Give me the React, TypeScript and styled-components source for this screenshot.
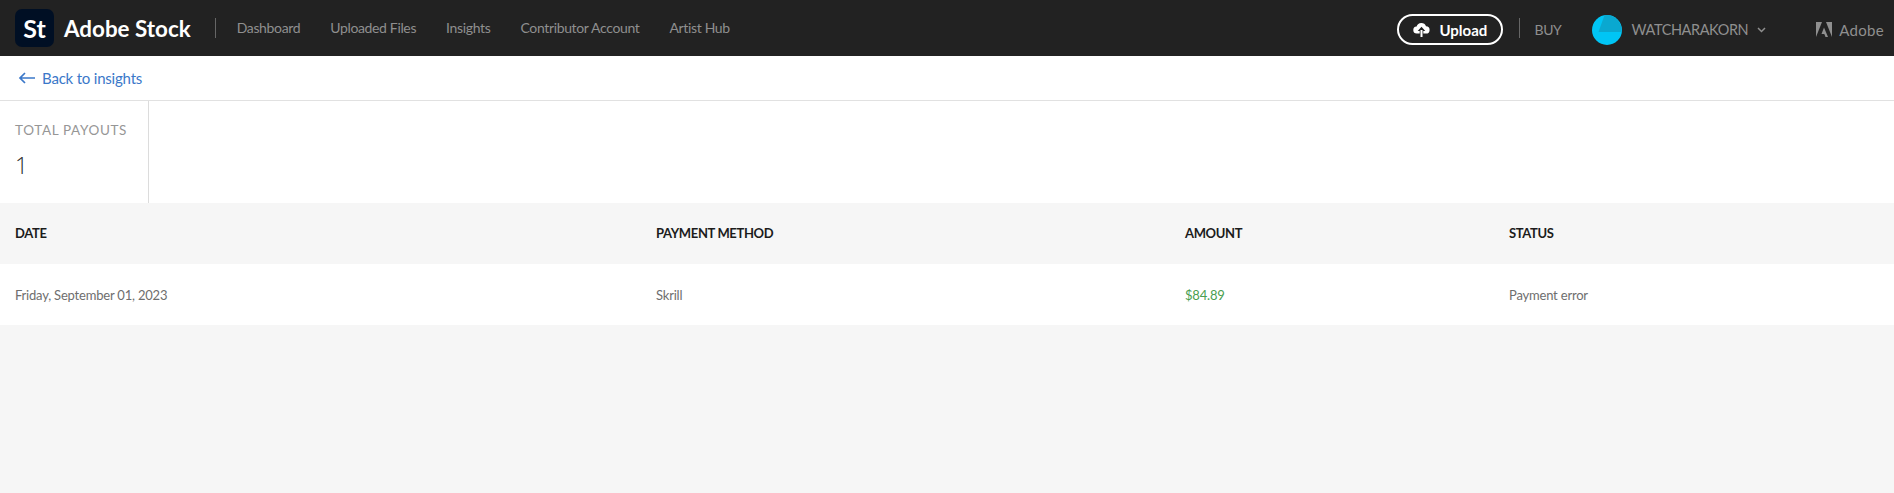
import { createGlobalStyle, styled } from "styled-components";

const GlobalStyle = createGlobalStyle`
  html, body {
    margin: 0;
    padding: 0;
    height: 100%;
    background: #f6f6f6;
    font-family: "Lato", "Open Sans", sans-serif;
  }
`;

const Page = styled.div`
  min-height: 493px;
  background: #f6f6f6;
`;

const Header = styled.header`
  height: 56px;
  background: #222222;
  display: flex;
  align-items: center;
  padding: 0 10px 0 15px;
`;

const LogoTile = styled.div`
  width: 39px;
  height: 38px;
  border-radius: 7px;
  background: #000f24;
  color: #fff;
  font-size: 25px;
  font-weight: 700;
  display: flex;
  align-items: center;
  justify-content: center;
`;

const Brand = styled.div`
  margin-left: 10px;
  color: #fff;
  font-size: 22.4px;
  font-weight: 700;
  white-space: nowrap;
`;

const Divider = styled.span<{ $before: number; $after: number; $lift?: number }>`
  width: 1px;
  height: 20px;
  background: #666;
  margin: ${(p) => (p.$lift ? `-${p.$lift}px` : "0")} ${(p) => p.$after}px 0 ${(p) => p.$before}px;
`;

const Nav = styled.nav`
  display: flex;
  gap: 30px;
  margin-bottom: 2px;
`;

const NavLink = styled.a`
  color: #8f8f8f;
  font-size: 14px;
  letter-spacing: -0.35px;
  white-space: nowrap;
`;

const HeaderRight = styled.div`
  margin-left: auto;
  padding-top: 3px;
  display: flex;
  align-items: center;
`;

const UploadButton = styled.button`
  width: 106px;
  height: 31px;
  box-sizing: border-box;
  border: 2px solid #fff;
  border-radius: 16px;
  background: transparent;
  color: #fff;
  font: 700 15px "Lato", sans-serif;
  display: flex;
  align-items: center;
  justify-content: center;
  gap: 9px;
  padding: 0;
`;

const Buy = styled.span`
  color: #8f8f8f;
  font-size: 14px;
  letter-spacing: -0.3px;
`;

const Avatar = styled.svg`
  width: 30px;
  height: 30px;
  margin-left: 30px;
`;

const UserName = styled.span`
  margin-left: 10px;
  color: #8f8f8f;
  font-size: 14.5px;
  letter-spacing: -0.4px;
  white-space: nowrap;
`;

const Chevron = styled.svg`
  width: 9px;
  height: 6px;
  margin-left: 9px;
`;

const AdobeMark = styled.svg`
  width: 16px;
  height: 15px;
  margin-left: 50px;
`;

const AdobeText = styled.span`
  margin-left: 7px;
  color: #8f8f8f;
  font-size: 15px;
  letter-spacing: 0.3px;
`;

const BackBar = styled.div`
  height: 44px;
  background: #fff;
  border-bottom: 1px solid #e1e1e1;
  display: flex;
  align-items: center;
  padding-left: 18px;
  gap: 7px;
`;

const BackLink = styled.a`
  color: #3b78c9;
  font-size: 15px;
  letter-spacing: -0.2px;
`;

const StatsBar = styled.section`
  height: 102px;
  background: #fff;
  display: flex;
`;

const StatCell = styled.div`
  width: 149px;
  box-sizing: border-box;
  border-right: 1px solid #dcdcdc;
  padding: 21px 0 0 15px;
`;

const StatLabel = styled.div`
  color: #969696;
  font-size: 13.5px;
  letter-spacing: 0.65px;
  line-height: 17px;
`;

const StatValue = styled.div`
  margin-top: 12px;
  color: #2c2c2c;
  font-family: "Open Sans", sans-serif;
  font-size: 23px;
  font-weight: 300;
  line-height: 28px;
`;

const Row = styled.div<{ $head?: boolean }>`
  height: 61px;
  display: grid;
  grid-template-columns: 641px 529px 324px 1fr;
  align-items: center;
  padding-left: 15px;
  background: ${(p) => (p.$head ? "#f6f6f6" : "#fff")};
`;

const HeadCell = styled.div`
  color: #1c1c1c;
  font-size: 13px;
  font-weight: 700;
  letter-spacing: -0.35px;
  margin-top: -1px;
`;

const Cell = styled.div<{ $green?: boolean }>`
  color: ${(p) => (p.$green ? "#4a9e4f" : "#6e6e6e")};
  font-size: 13px;
  letter-spacing: -0.2px;
`;

export default function App() {
  return (
    <Page>
      <GlobalStyle />
      <Header>
        <LogoTile>St</LogoTile>
        <Brand>Adobe Stock</Brand>
        <Divider $before={24} $after={21} />
        <Nav>
          <NavLink>Dashboard</NavLink>
          <NavLink>Uploaded Files</NavLink>
          <NavLink>Insights</NavLink>
          <NavLink>Contributor Account</NavLink>
          <NavLink>Artist Hub</NavLink>
        </Nav>
        <HeaderRight>
          <UploadButton>
            <svg width="17" height="15" viewBox="0 0 17 15">
              <path
                d="M4 11.5a3.5 3.5 0 0 1-.4-7A5 5 0 0 1 13 4.3a3.6 3.6 0 0 1 0 7.2h-2.7V9h2L8.500 4.800 4.700 9h2v2.500z"
                fill="#fff"
              />
              <rect x="7.500" y="8" width="2" height="7" fill="#fff" />
            </svg>
            Upload
          </UploadButton>
          <Divider $before={16} $after={14} $lift={3} />
          <Buy>BUY</Buy>
          <Avatar viewBox="0 0 30 30">
            <circle cx="15" cy="15" r="15" fill="#00c5f5" />
            <path d="M12.500 .2L6.500 17H29.500A15 15 0 0 0 12.500 .2Z" fill="#0aa8d0" />
          </Avatar>
          <UserName>WATCHARAKORN</UserName>
          <Chevron viewBox="0 0 9 6">
            <path d="M1 1l3.500 3.500L8 1" fill="none" stroke="#8f8f8f" strokeWidth="1.500" />
          </Chevron>
          <AdobeMark viewBox="0 0 16 15">
            <path d="M0 0h6L0 15zM10 0h6v15zM8 5.500L12 15H9.500L8.300 12H5.500z" fill="#8f8f8f" />
          </AdobeMark>
          <AdobeText>Adobe</AdobeText>
        </HeaderRight>
      </Header>
      <BackBar>
        <svg width="17" height="12" viewBox="0 0 17 12">
          <path d="M17 6H2M7 1L2 6l5 5" fill="none" stroke="#3b78c9" strokeWidth="1.700" />
        </svg>
        <BackLink>Back to insights</BackLink>
      </BackBar>
      <StatsBar>
        <StatCell>
          <StatLabel>TOTAL PAYOUTS</StatLabel>
          <StatValue>1</StatValue>
        </StatCell>
      </StatsBar>
      <Row $head>
        <HeadCell>DATE</HeadCell>
        <HeadCell>PAYMENT METHOD</HeadCell>
        <HeadCell>AMOUNT</HeadCell>
        <HeadCell>STATUS</HeadCell>
      </Row>
      <Row>
        <Cell>Friday, September 01, 2023</Cell>
        <Cell>Skrill</Cell>
        <Cell $green>$84.89</Cell>
        <Cell>Payment error</Cell>
      </Row>
    </Page>
  );
}
